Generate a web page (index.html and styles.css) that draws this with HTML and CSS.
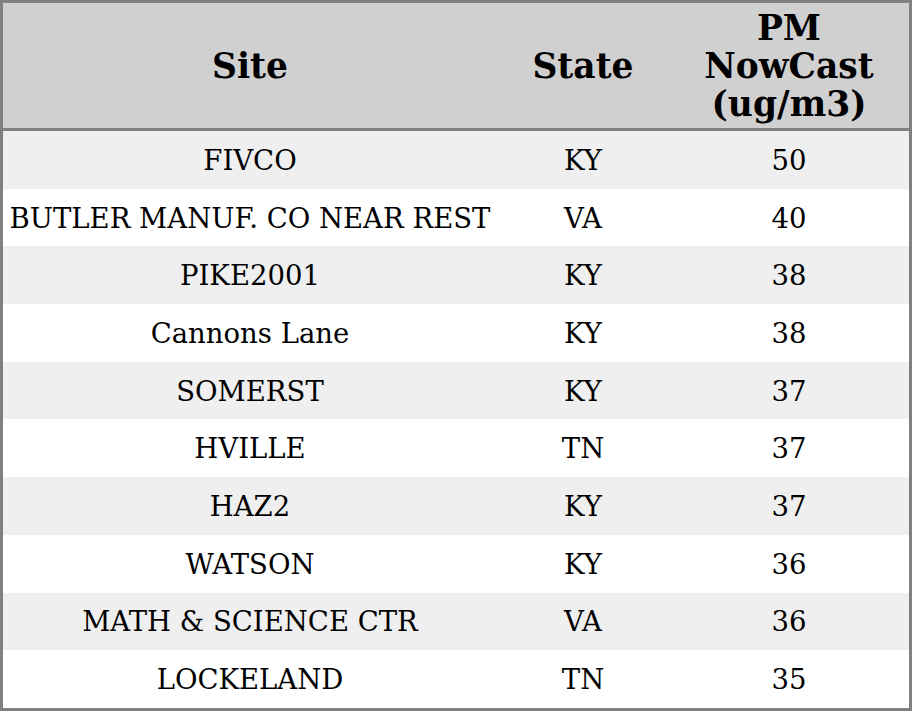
FILE: index.html
```html
<!DOCTYPE html>
<html>
<head>
<meta charset="utf-8">
<link rel="stylesheet" href="styles.css">
</head>
<body>
<table class="aq">
  <colgroup><col class="c-site"><col class="c-state"><col class="c-pm"></colgroup>
  <thead>
    <tr class="head"><th>Site</th><th>State</th><th>PM NowCast (ug/m3)</th></tr>
  </thead>
  <tbody>
    <tr><td>FIVCO</td><td>KY</td><td>50</td></tr>
    <tr><td>BUTLER MANUF. CO NEAR REST</td><td>VA</td><td>40</td></tr>
    <tr><td>PIKE2001</td><td>KY</td><td>38</td></tr>
    <tr><td>Cannons Lane</td><td>KY</td><td>38</td></tr>
    <tr><td>SOMERST</td><td>KY</td><td>37</td></tr>
    <tr><td>HVILLE</td><td>TN</td><td>37</td></tr>
    <tr><td>HAZ2</td><td>KY</td><td>37</td></tr>
    <tr><td>WATSON</td><td>KY</td><td>36</td></tr>
    <tr><td>MATH &amp; SCIENCE CTR</td><td>VA</td><td>36</td></tr>
    <tr><td>LOCKELAND</td><td>TN</td><td>35</td></tr>
  </tbody>
</table>
</body>
</html>
```
FILE: styles.css
```css
html, body {
  margin: 0;
  padding: 0;
  background: #ffffff;
}
.aq {
  width: 912px;
  border-collapse: separate;
  border-spacing: 0;
  border: 3px solid #808080;
  font-family: "DejaVu Serif", serif;
  color: #000;
  table-layout: fixed;
}
.c-site { width: 494px; }
.c-state { width: 172px; }
.c-pm { width: 240px; }
.head th {
  height: 125px;
  padding: 0 8px;
  background: #d0d0d0;
  border-bottom: 3px solid #808080;
  font-size: 34.5px;
  font-weight: bold;
  line-height: 38px;
  text-align: center;
  vertical-align: middle;
}
.aq td {
  height: 57.7px;
  padding: 0 4px;
  font-size: 27.5px;
  text-align: center;
  vertical-align: middle;
  white-space: nowrap;
}
.aq tbody tr:nth-child(odd) td { background: #efefef; }
.aq tbody tr:nth-child(even) td { background: #ffffff; }
```
